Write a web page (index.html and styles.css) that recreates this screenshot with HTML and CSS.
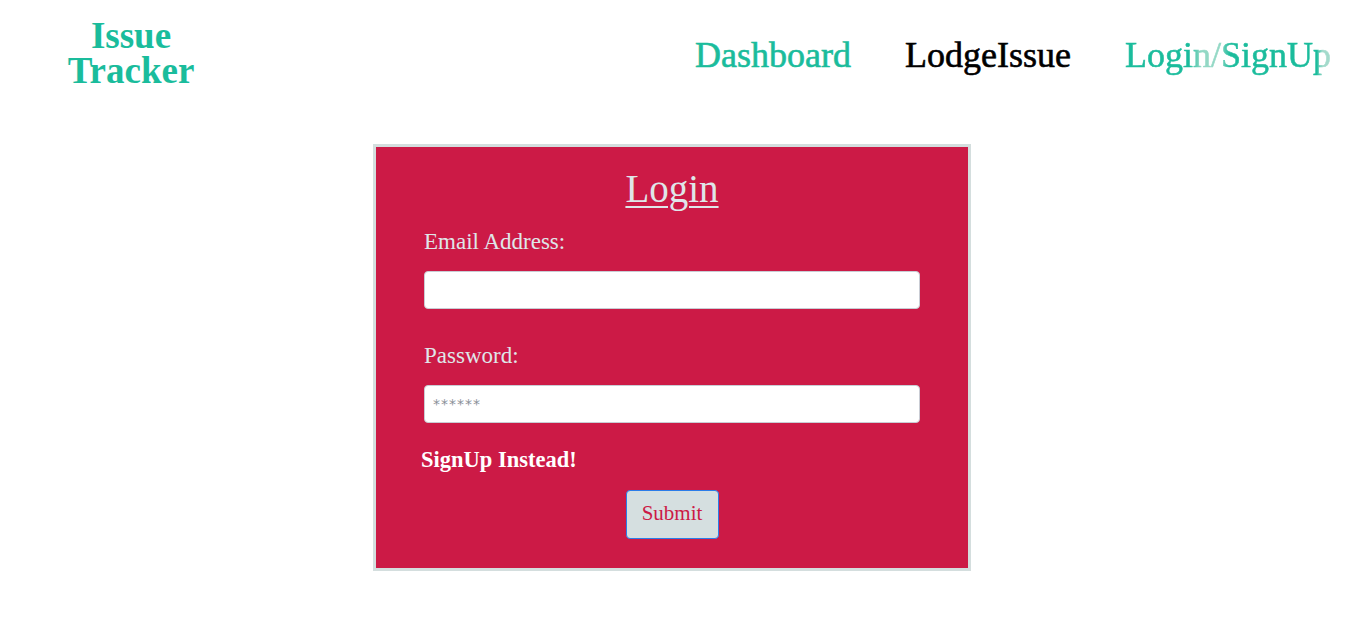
FILE: index.html
```html
<!DOCTYPE html>
<html lang="en">
<head>
<meta charset="utf-8">
<title>Issue Tracker</title>
<link rel="stylesheet" href="styles.css">
</head>
<body>
<header class="topbar">
  <div class="logo">Issue<br>Tracker</div>
  <nav class="nav">
    <a class="nav-link nav-green" href="#">Dashboard</a>
    <a class="nav-link nav-dark" href="#">LodgeIssue</a>
    <a class="nav-link nav-green nav-fade" href="#">Login/SignUp</a>
  </nav>
</header>
<main class="main">
  <form class="card">
    <h2 class="card-title">Login</h2>
    <label class="field-label" for="email">Email Address:</label>
    <input class="field-input" id="email" type="email">
    <label class="field-label label-pass" for="pass">Password:</label>
    <input class="field-input" id="pass" type="password" placeholder="******">
    <a class="switch-link" href="#">SignUp Instead!</a>
    <div class="actions">
      <button class="submit-btn" type="button">Submit</button>
    </div>
  </form>
</main>
</body>
</html>
```

FILE: styles.css
```css
* { box-sizing: border-box; }
html, body { margin: 0; padding: 0; background: #ffffff; }
body { font-family: "Liberation Serif", "Times New Roman", serif; }

.topbar {
  display: flex;
  justify-content: space-between;
  align-items: flex-start;
  padding: 18px 16px 0 31px;
  height: 87px;
}
.logo {
  width: 200px;
  text-align: center;
  font-weight: bold;
  font-size: 37px;
  line-height: 35px;
  color: #1abc9c;
}
.nav {
  display: flex;
  gap: 54px;
  margin-top: 15px;
}
.nav-link {
  font-size: 36px;
  line-height: 44px;
  text-decoration: none;
  -webkit-text-stroke: 0.6px currentColor;
}
.nav-green { color: #1abc9c; }
.nav-dark { color: #000000; }
.nav-fade {
  background: linear-gradient(90deg, #1abc9c 0%, #1abc9c 31%, #93d8c5 37%, #93d8c5 46%, #1abc9c 51%, #1abc9c 93%, #a3dacb 96%);
  -webkit-background-clip: text;
  background-clip: text;
  color: transparent;
  -webkit-text-stroke: 0.6px transparent;
}

.main {
  padding: 57px 3px 0 0;
}
.card {
  width: 598px;
  margin: 0 auto;
  background: #cc1a46;
  border: 3px solid #d4dede;
  padding: 18px 48px 29px;
  display: flex;
  flex-direction: column;
}
.card-title {
  margin: 0;
  text-align: center;
  font-weight: normal;
  font-size: 39px;
  line-height: 48px;
  color: #dfe6e9;
  text-decoration: underline;
  text-decoration-thickness: 2px;
  text-underline-offset: 4px;
}
.field-label {
  margin-top: 16px;
  font-size: 23px;
  line-height: 26px;
  color: #dfe6e9;
}
.label-pass { margin-top: 34px; }
.field-input {
  margin-top: 16px;
  width: 100%;
  height: 38px;
  border: 1px solid #c9ccd4;
  border-radius: 4px;
  background: #ffffff;
  padding: 0 8px;
  font-family: "DejaVu Sans", sans-serif;
  font-size: 14px;
  letter-spacing: 1px;
}
.field-input::placeholder { color: #8a8f98; }
.switch-link {
  margin-top: 24px;
  margin-left: -3px;
  font-size: 22.5px;
  line-height: 26px;
  font-weight: bold;
  color: #ffffff;
  text-decoration: none;
}
.actions {
  display: flex;
  justify-content: center;
  margin-top: 17px;
}
.submit-btn {
  width: 93px;
  height: 49px;
  background: #d5dfe0;
  border: 1px solid #2b7de9;
  border-radius: 4px;
  font-family: "Liberation Serif", "Times New Roman", serif;
  font-size: 21px;
  color: #cc1a46;
  padding: 0 0 3px;
}
```
